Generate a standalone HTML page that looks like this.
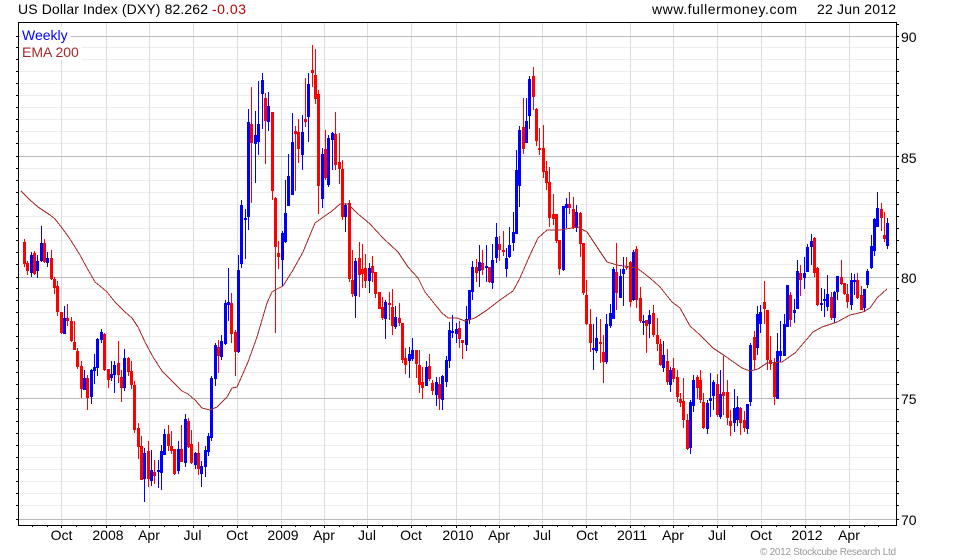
<!DOCTYPE html>
<html><head><meta charset="utf-8"><title>US Dollar Index (DXY)</title>
<style>html,body{margin:0;padding:0;background:#fff}svg{display:block}text{font-family:"Liberation Sans",Arial,sans-serif;font-size:14px;fill:#000}</style></head>
<body>
<svg width="980" height="560" viewBox="0 0 980 560" xmlns="http://www.w3.org/2000/svg">
<g shape-rendering="crispEdges" fill="none">
<path stroke="#eeeeee" d="M18 47.5H896M18 59.5H896M18 71.5H896M18 83.5H896M18 95.5H896M18 107.5H896M18 119.5H896M18 131.5H896M18 143.5H896M18 168.5H896M18 180.5H896M18 192.5H896M18 204.5H896M18 216.5H896M18 228.5H896M18 240.5H896M18 252.5H896M18 264.5H896M18 288.5H896M18 300.5H896M18 312.5H896M18 324.5H896M18 336.5H896M18 348.5H896M18 360.5H896M18 372.5H896M18 384.5H896M18 409.5H896M18 421.5H896M18 433.5H896M18 445.5H896M18 457.5H896M18 469.5H896M18 481.5H896M18 493.5H896M18 505.5H896"/>
<path stroke="#dddddd" d="M61.5 22V525M106.5 22V525M149.5 22V525M193.5 22V525M237.5 22V525M281.5 22V525M324.5 22V525M367.5 22V525M411.5 22V525M456.5 22V525M499.5 22V525M542.5 22V525M586.5 22V525M630.5 22V525M673.5 22V525M717.5 22V525M761.5 22V525M805.5 22V525M849.5 22V525"/>
<path stroke="#bbbbbb" d="M18 36.5H896M18 156.5H896M18 277.5H896M18 398.5H896M18 519.5H896"/>
<rect x="20" y="27" width="51" height="17" fill="#fff"/>
<rect x="20" y="44" width="62" height="16" fill="#fff"/>
<path stroke="#000" d="M18.5 22V525.5M18 22.5H897M896.5 22V525.5M18 525.5H897"/>
<path stroke="#000" d="M16 36.5H18M16 47.5H18M16 59.5H18M16 71.5H18M16 83.5H18M16 95.5H18M16 107.5H18M16 119.5H18M16 131.5H18M16 143.5H18M16 156.5H18M16 168.5H18M16 180.5H18M16 192.5H18M16 204.5H18M16 216.5H18M16 228.5H18M16 240.5H18M16 252.5H18M16 264.5H18M16 277.5H18M16 288.5H18M16 300.5H18M16 312.5H18M16 324.5H18M16 336.5H18M16 348.5H18M16 360.5H18M16 372.5H18M16 384.5H18M16 398.5H18M16 409.5H18M16 421.5H18M16 433.5H18M16 445.5H18M16 457.5H18M16 469.5H18M16 481.5H18M16 493.5H18M16 505.5H18M16 519.5H18"/>
<path stroke="#000" d="M897 24.5H899M897 36.5H899M897 47.5H899M897 59.5H899M897 71.5H899M897 83.5H899M897 95.5H899M897 107.5H899M897 119.5H899M897 131.5H899M897 143.5H899M897 156.5H899M897 168.5H899M897 180.5H899M897 192.5H899M897 204.5H899M897 216.5H899M897 228.5H899M897 240.5H899M897 252.5H899M897 264.5H899M897 277.5H899M897 288.5H899M897 300.5H899M897 312.5H899M897 324.5H899M897 336.5H899M897 348.5H899M897 360.5H899M897 372.5H899M897 384.5H899M897 398.5H899M897 409.5H899M897 421.5H899M897 433.5H899M897 445.5H899M897 457.5H899M897 469.5H899M897 481.5H899M897 493.5H899M897 505.5H899M897 519.5H899"/>
<path stroke="#000" d="M32.5 526V527M47.5 526V527M61.5 526V528M76.5 526V527M91.5 526V527M106.5 526V528M120.5 526V527M135.5 526V527M149.5 526V528M164.5 526V527M178.5 526V527M193.5 526V528M208.5 526V527M222.5 526V527M237.5 526V528M252.5 526V527M266.5 526V527M281.5 526V528M295.5 526V527M310.5 526V527M324.5 526V528M339.5 526V527M353.5 526V527M367.5 526V528M382.5 526V527M397.5 526V527M411.5 526V528M426.5 526V527M441.5 526V527M456.5 526V528M470.5 526V527M485.5 526V527M499.5 526V528M514.5 526V527M528.5 526V527M542.5 526V528M557.5 526V527M572.5 526V527M586.5 526V528M601.5 526V527M615.5 526V527M630.5 526V528M644.5 526V527M659.5 526V527M673.5 526V528M688.5 526V527M702.5 526V527M717.5 526V528M732.5 526V527M746.5 526V527M761.5 526V528M776.5 526V527M790.5 526V527M805.5 526V528M820.5 526V527M834.5 526V527M849.5 526V528M864.5 526V527M878.5 526V527"/>
<!-- blue wicks -->
<path stroke="#0000ff" d="M31.5 252V277M37.5 255V278M41.5 226V262M47.5 252V267M64.5 306V334M84.5 370V390M91.5 369V404M94.5 354V384M97.5 338V376M101.5 329V343M111.5 361V381M114.5 361V393M124.5 349V391M144.5 448V502M151.5 450V486M158.5 460V488M161.5 445V490M164.5 429V455M178.5 441V474M185.5 414V467M195.5 452V469M201.5 461V487M205.5 446V477M208.5 433V456M211.5 376V441M215.5 343V386M221.5 335V360M225.5 300V345M228.5 268V321M238.5 255V353M241.5 200V268M245.5 209V259M248.5 109V230M255.5 111V183M258.5 81V155M262.5 73V129M268.5 92V131M282.5 231V286M285.5 180V243M288.5 154V206M292.5 113V195M302.5 115V170M308.5 73V142M322.5 148V208M328.5 135V187M332.5 132V170M345.5 203V232M355.5 258V318M369.5 263V293M385.5 300V339M395.5 306V329M409.5 347V378M412.5 338V361M426.5 361V386M436.5 377V406M442.5 375V410M446.5 356V387M449.5 322V368M452.5 315V338M456.5 323V343M466.5 306V351M469.5 290V324M472.5 261V300M479.5 245V287M486.5 245V282M492.5 244V289M496.5 223V263M506.5 248V277M509.5 227V258M513.5 212V251M516.5 150V234M519.5 126V207M526.5 98V143M529.5 76V129M563.5 206V271M566.5 198V228M576.5 205V232M593.5 324V370M596.5 317V353M606.5 314V364M610.5 304V328M613.5 267V319M620.5 269V298M623.5 257V306M633.5 250V301M643.5 315V335M649.5 310V338M663.5 341V372M670.5 367V392M690.5 400V454M693.5 375V412M707.5 400V434M710.5 373V417M713.5 380V410M720.5 370V419M734.5 389V432M737.5 396V426M747.5 404V434M750.5 343V406M757.5 306V355M760.5 305V333M777.5 333V399M780.5 321V362M784.5 314V356M787.5 285V327M794.5 299V323M797.5 260V309M804.5 257V289M807.5 244V272M811.5 234V265M821.5 288V311M824.5 289V317M827.5 275V311M834.5 291V323M837.5 276V300M851.5 273V310M854.5 274V295M864.5 289V312M867.5 269V288M871.5 235V269M874.5 218V256M877.5 192V227M887.5 218V249"/>
<!-- blue bodies -->
<path stroke="#0000ff" stroke-width="3" d="M31.5 255V273M37.5 261V271M41.5 243V261M47.5 258V263M64.5 318V334M84.5 378V390M91.5 370V397M94.5 367V371M97.5 339V368M101.5 332V340M111.5 374V378M114.5 365V375M124.5 358V388M144.5 453V479M151.5 470V481M158.5 470V472M161.5 451V473M164.5 434V455M178.5 449V471M185.5 419V463M195.5 453V465M201.5 466V474M205.5 450V467M208.5 436V452M211.5 378V438M215.5 345V379M221.5 341V357M225.5 303V344M228.5 302V305M238.5 270V352M241.5 205V264M245.5 218V220M248.5 122V217M255.5 135V144M258.5 124V142M262.5 80V94M268.5 106V122M282.5 233V260M285.5 213V242M288.5 176V206M292.5 142V195M302.5 132V155M308.5 84V117M322.5 154V199M328.5 138V185M332.5 133V140M345.5 205V217M355.5 261V296M369.5 268V281M385.5 302V319M395.5 317V327M409.5 354V361M412.5 350V359M426.5 367V386M436.5 382V395M442.5 376V400M446.5 360V382M449.5 330V361M452.5 331V333M456.5 329V334M466.5 319V345M469.5 290V320M472.5 267V292M479.5 262V271M486.5 266V268M492.5 260V283M496.5 237V258M506.5 258V269M509.5 245V257M513.5 232V243M516.5 170V234M519.5 130V186M526.5 121V143M529.5 79V116M563.5 206V270M566.5 204V208M576.5 212V228M593.5 348V350M596.5 338V351M606.5 324V362M610.5 313V326M613.5 269V319M620.5 276V298M623.5 269V274M633.5 252V300M643.5 321V323M649.5 315V324M663.5 355V368M670.5 370V385M690.5 402V448M693.5 380V406M707.5 403V429M710.5 398V401M713.5 382V396M720.5 394V417M734.5 408V423M737.5 407V420M747.5 404V429M750.5 345V402M757.5 314V348M760.5 312V324M777.5 351V399M780.5 351V356M784.5 324V356M787.5 285V327M794.5 310V313M797.5 271V309M804.5 273V278M807.5 247V272M811.5 241V247M821.5 303V305M824.5 299V301M827.5 294V307M834.5 292V318M837.5 276V292M851.5 280V305M854.5 280V282M864.5 289V308M867.5 271V285M871.5 246V268M874.5 219V251M877.5 208V227M887.5 223V246"/>
<!-- red wicks -->
<path stroke="#ff0000" d="M24.5 239V267M27.5 261V275M34.5 251V275M44.5 239V263M51.5 250V280M54.5 277V294M57.5 281V316M61.5 312V334M67.5 304V326M71.5 317V342M74.5 321V350M77.5 348V369M81.5 361V398M87.5 375V410M104.5 333V371M108.5 369V388M118.5 341V383M121.5 370V402M128.5 357V376M131.5 361V389M134.5 381V433M138.5 423V459M141.5 436V480M148.5 441V487M154.5 460V484M168.5 425V451M171.5 431V454M174.5 449V475M181.5 425V462M188.5 418V448M191.5 430V464M198.5 442V475M218.5 340V373M231.5 293V343M235.5 330V376M251.5 87V203M265.5 93V164M272.5 112V200M275.5 197V333M278.5 241V269M295.5 126V191M298.5 119V163M305.5 78V127M312.5 45V87M315.5 49V104M318.5 90V214M325.5 130V180M335.5 112V170M339.5 133V184M342.5 160V220M349.5 200V282M352.5 250V297M359.5 242V297M362.5 244V288M365.5 254V288M372.5 256V282M375.5 272V298M379.5 292V309M382.5 297V320M389.5 292V320M392.5 289V335M399.5 303V326M402.5 323V363M405.5 348V374M416.5 350V378M419.5 350V393M422.5 367V399M429.5 354V381M432.5 380V395M439.5 377V410M459.5 321V348M462.5 340V359M476.5 259V282M482.5 250V275M489.5 267V283M499.5 236V261M503.5 231V256M523.5 98V154M533.5 67V110M536.5 108V146M539.5 128V155M543.5 125V178M546.5 161V190M549.5 167V227M553.5 194V225M556.5 214V243M559.5 240V275M569.5 192V214M573.5 197V229M580.5 212V257M583.5 243V295M586.5 280V325M590.5 309V352M600.5 319V363M603.5 335V383M616.5 243V310M626.5 257V270M630.5 261V307M636.5 246V308M640.5 287V323M646.5 320V353M653.5 305V337M657.5 318V351M660.5 339V366M667.5 349V385M673.5 358V382M677.5 370V402M680.5 393V407M683.5 378V428M687.5 414V450M697.5 375V399M700.5 370V403M703.5 393V429M717.5 374V417M723.5 356V415M727.5 380V425M730.5 410V436M740.5 407V435M744.5 411V432M754.5 331V370M764.5 281V324M767.5 310V370M770.5 336V370M774.5 358V405M790.5 292V327M800.5 265V296M814.5 237V277M817.5 267V306M831.5 292V320M841.5 260V285M844.5 283V295M847.5 284V308M857.5 273V299M861.5 286V310M881.5 203V231M884.5 212V242"/>
<!-- red bodies -->
<path stroke="#ff0000" stroke-width="3" d="M24.5 242V264M27.5 263V271M34.5 253V274M44.5 243V262M51.5 258V279M54.5 279V288M57.5 286V312M61.5 312V333M67.5 318V321M71.5 321V341M74.5 342V350M77.5 351V367M81.5 366V389M87.5 378V398M104.5 334V370M108.5 369V380M118.5 363V375M121.5 377V388M128.5 358V372M131.5 371V385M134.5 385V430M138.5 428V447M141.5 446V480M148.5 451V479M154.5 472V476M168.5 434V446M171.5 446V451M174.5 449V474M181.5 449V462M188.5 421V447M191.5 444V463M198.5 453V469M218.5 347V356M231.5 303V334M235.5 332V352M251.5 124V143M265.5 98V121M272.5 112V191M275.5 198V247M278.5 253V257M295.5 131V134M298.5 132V149M305.5 119V122M312.5 70V73M315.5 75V99M318.5 94V186M325.5 149V178M335.5 134V165M339.5 162V169M342.5 169V217M349.5 203V279M352.5 280V294M359.5 258V275M362.5 269V274M365.5 268V281M372.5 266V273M375.5 272V294M379.5 292V309M382.5 307V318M389.5 303V305M392.5 307V326M399.5 318V323M402.5 323V360M405.5 358V365M416.5 350V364M419.5 365V385M422.5 382V388M429.5 366V379M432.5 383V391M439.5 384V399M459.5 328V339M462.5 340V343M476.5 267V273M482.5 263V270M489.5 267V282M499.5 244V250M503.5 250V252M523.5 127V149M533.5 76V97M536.5 109V141M539.5 148V150M543.5 148V172M546.5 171V183M549.5 182V218M553.5 214V219M556.5 214V241M559.5 240V269M569.5 204V208M573.5 209V228M580.5 213V244M583.5 243V293M586.5 295V324M590.5 324V343M600.5 342V344M603.5 352V362M616.5 272V293M626.5 267V268M630.5 262V302M636.5 249V300M640.5 298V321M646.5 320V326M653.5 313V335M657.5 335V344M660.5 344V365M667.5 361V382M673.5 368V379M677.5 377V397M680.5 399V403M683.5 401V420M687.5 420V449M697.5 377V388M700.5 380V400M703.5 402V428M717.5 384V415M723.5 392V396M727.5 392V418M730.5 421V426M740.5 408V423M744.5 420V428M754.5 337V360M764.5 302V309M767.5 310V360M770.5 360V364M774.5 363V397M790.5 295V320M800.5 273V280M814.5 238V273M817.5 268V305M831.5 297V318M841.5 277V284M844.5 283V294M847.5 294V302M857.5 280V298M861.5 295V310M881.5 209V218M884.5 235V239"/>
</g>
<polyline fill="none" stroke="#a52a2a" stroke-width="1" shape-rendering="crispEdges" points="21,191 30,200 38,207 50,215 55,219 62,228 70,239 80,255 87,268 95,282 100,286 107,292 115,302 125,312 132,318 138,327 145,342 153,357 162,371 173,382 182,391 188,394 195,400 202,408 210,410 217,407 227,397 232,388 237,387 241,378 248,362 257,337 267,303 272,292 277,289 283,286 293,270 303,252 315,223 322,218 332,211 340,204 348,204 357,213 370,224 383,238 398,252 408,267 418,278 425,292 433,302 442,313 448,318 457,318 465,321 475,318 487,310 500,300 513,291 520,278 530,255 538,238 547,230 560,230 578,227 587,232 597,247 607,262 617,265 637,268 650,278 660,287 672,302 680,308 690,326 700,335 713,348 725,356 742,368 750,371 758,369 767,363 782,362 795,353 813,332 822,327 837,322 850,315 863,312 870,308 877,298 887,289"/>
<text x="18" y="14" textLength="190" lengthAdjust="spacing">US Dollar Index (DXY) 82.262</text>
<text x="212" y="14" textLength="34" lengthAdjust="spacing" style="fill:#c00000">-0.03</text>
<text x="652" y="14" textLength="145" lengthAdjust="spacing">www.fullermoney.com</text>
<text x="817" y="14" textLength="79" lengthAdjust="spacing">22 Jun 2012</text>
<text x="22" y="40" style="fill:#0000ff">Weekly</text>
<text x="22" y="57" style="fill:#a52a2a">EMA 200</text>
<text x="901" y="42">90</text>
<text x="901" y="163">85</text>
<text x="901" y="283">80</text>
<text x="901" y="404">75</text>
<text x="901" y="525">70</text>
<g text-anchor="middle">
<text x="61.5" y="540">Oct</text>
<text x="108" y="540">2008</text>
<text x="149" y="540">Apr</text>
<text x="192.5" y="540">Jul</text>
<text x="237" y="540">Oct</text>
<text x="283" y="540">2009</text>
<text x="324" y="540">Apr</text>
<text x="367" y="540">Jul</text>
<text x="411" y="540">Oct</text>
<text x="458" y="540">2010</text>
<text x="499" y="540">Apr</text>
<text x="542" y="540">Jul</text>
<text x="587" y="540">Oct</text>
<text x="632" y="540">2011</text>
<text x="673" y="540">Apr</text>
<text x="717" y="540">Jul</text>
<text x="761" y="540">Oct</text>
<text x="807" y="540">2012</text>
<text x="849" y="540">Apr</text>
</g>
<text x="760" y="555" textLength="136" lengthAdjust="spacing" style="font-size:10px;fill:#999999">© 2012 Stockcube Research Ltd</text>
</svg>
</body></html>
